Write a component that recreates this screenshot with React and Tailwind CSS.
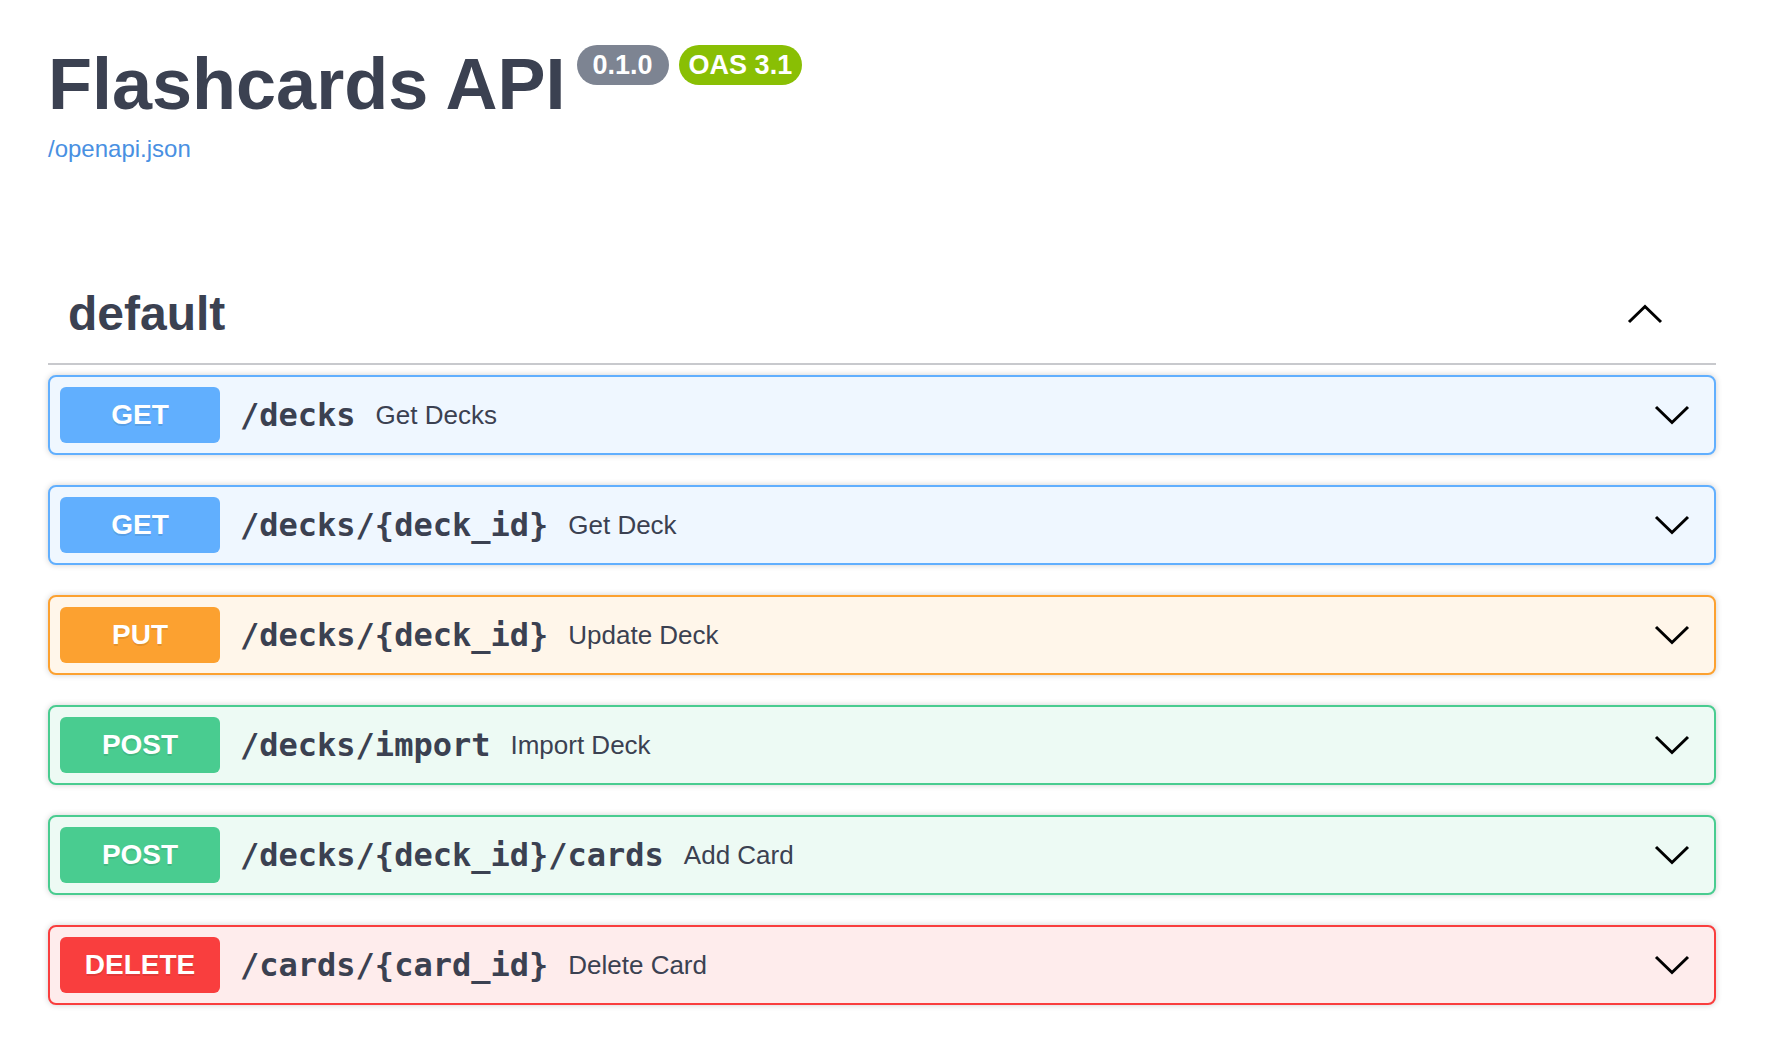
import React from 'react';

const sans = { fontFamily: '"Liberation Sans", Arial, sans-serif' };

const operations = [
  { method: 'GET', path: '/decks', summary: 'Get Decks' },
  { method: 'GET', path: '/decks/{deck_id}', summary: 'Get Deck' },
  { method: 'PUT', path: '/decks/{deck_id}', summary: 'Update Deck' },
  { method: 'POST', path: '/decks/import', summary: 'Import Deck' },
  { method: 'POST', path: '/decks/{deck_id}/cards', summary: 'Add Card' },
  { method: 'DELETE', path: '/cards/{card_id}', summary: 'Delete Card' },
];

const methodStyles = {
  GET: { block: 'bg-[#eff7ff] border-[#61affe]', badge: 'bg-[#61affe]' },
  PUT: { block: 'bg-[#fff6ea] border-[#fca130]', badge: 'bg-[#fca130]' },
  POST: { block: 'bg-[#edfaf4] border-[#49cc90]', badge: 'bg-[#49cc90]' },
  DELETE: { block: 'bg-[#feecec] border-[#f93e3e]', badge: 'bg-[#f93e3e]' },
};

const Chevron = ({ up = false }) => (
  <svg width="36" height="20" viewBox="0 0 36 20" fill="none">
    <polyline
      points={up ? '2,18 18,2.5 34,18' : '2,2 18,17.5 34,2'}
      stroke="#000"
      strokeWidth="3"
      strokeLinejoin="miter"
    />
  </svg>
);

const Operation = ({ method, path, summary }) => {
  const s = methodStyles[method];
  return (
    <div className={`flex items-center rounded-[8px] border-2 p-[10px] shadow-[0_0_6px_rgba(0,0,0,0.19)] ${s.block}`}>
      <span
        className={`w-[160px] shrink-0 rounded-[6px] py-[12px] text-center text-[28px] font-bold leading-[32px] text-white [text-shadow:0_2px_0_rgba(0,0,0,0.1)] ${s.badge}`}
        style={sans}
      >
        {method}
      </span>
      <span
        className="px-[20px] text-[32px] font-bold text-[#3b4151]"
        style={{ fontFamily: '"DejaVu Sans Mono", "Liberation Mono", monospace' }}
      >
        {path}
      </span>
      <span className="flex-1 text-[26px] text-[#3b4151]" style={sans}>
        {summary}
      </span>
      <span className="mr-[14px] flex items-center">
        <Chevron />
      </span>
    </div>
  );
};

export default function App() {
  return (
    <div className="min-h-screen bg-white pl-[48px] pr-[52px] pt-[43px]" style={sans}>
      {/* Info header */}
      <div className="flex items-start">
        <h1 className="text-[72px] font-bold leading-[83px] text-[#3b4151]">Flashcards API</h1>
        <div className="ml-[11px] mt-[2px] flex gap-[10px]">
          <span className="rounded-full bg-[#7d8492] px-[16px] py-[4px] text-[27px] font-bold leading-[32px] text-white">0.1.0</span>
          <span className="rounded-full bg-[#89bf04] px-[10px] py-[4px] text-[27px] font-bold leading-[32px] text-white">OAS 3.1</span>
        </div>
      </div>
      <a href="#" className="mt-[9px] block text-[24px] leading-[28px] text-[#4990e2]">/openapi.json</a>

      {/* Tag section */}
      <div className="mt-[102px]">
        <div className="flex items-center justify-between border-b-2 border-[#c8c9cd] py-[20px] pl-[20px] pr-[53px]">
          <h3 className="text-[48px] font-bold leading-[58px] text-[#3b4151]">default</h3>
          <Chevron up />
        </div>
        <div className="mt-[10px] flex flex-col gap-[30px]">
          {operations.map((op, i) => (
            <Operation key={i} {...op} />
          ))}
        </div>
      </div>
    </div>
  );
}
